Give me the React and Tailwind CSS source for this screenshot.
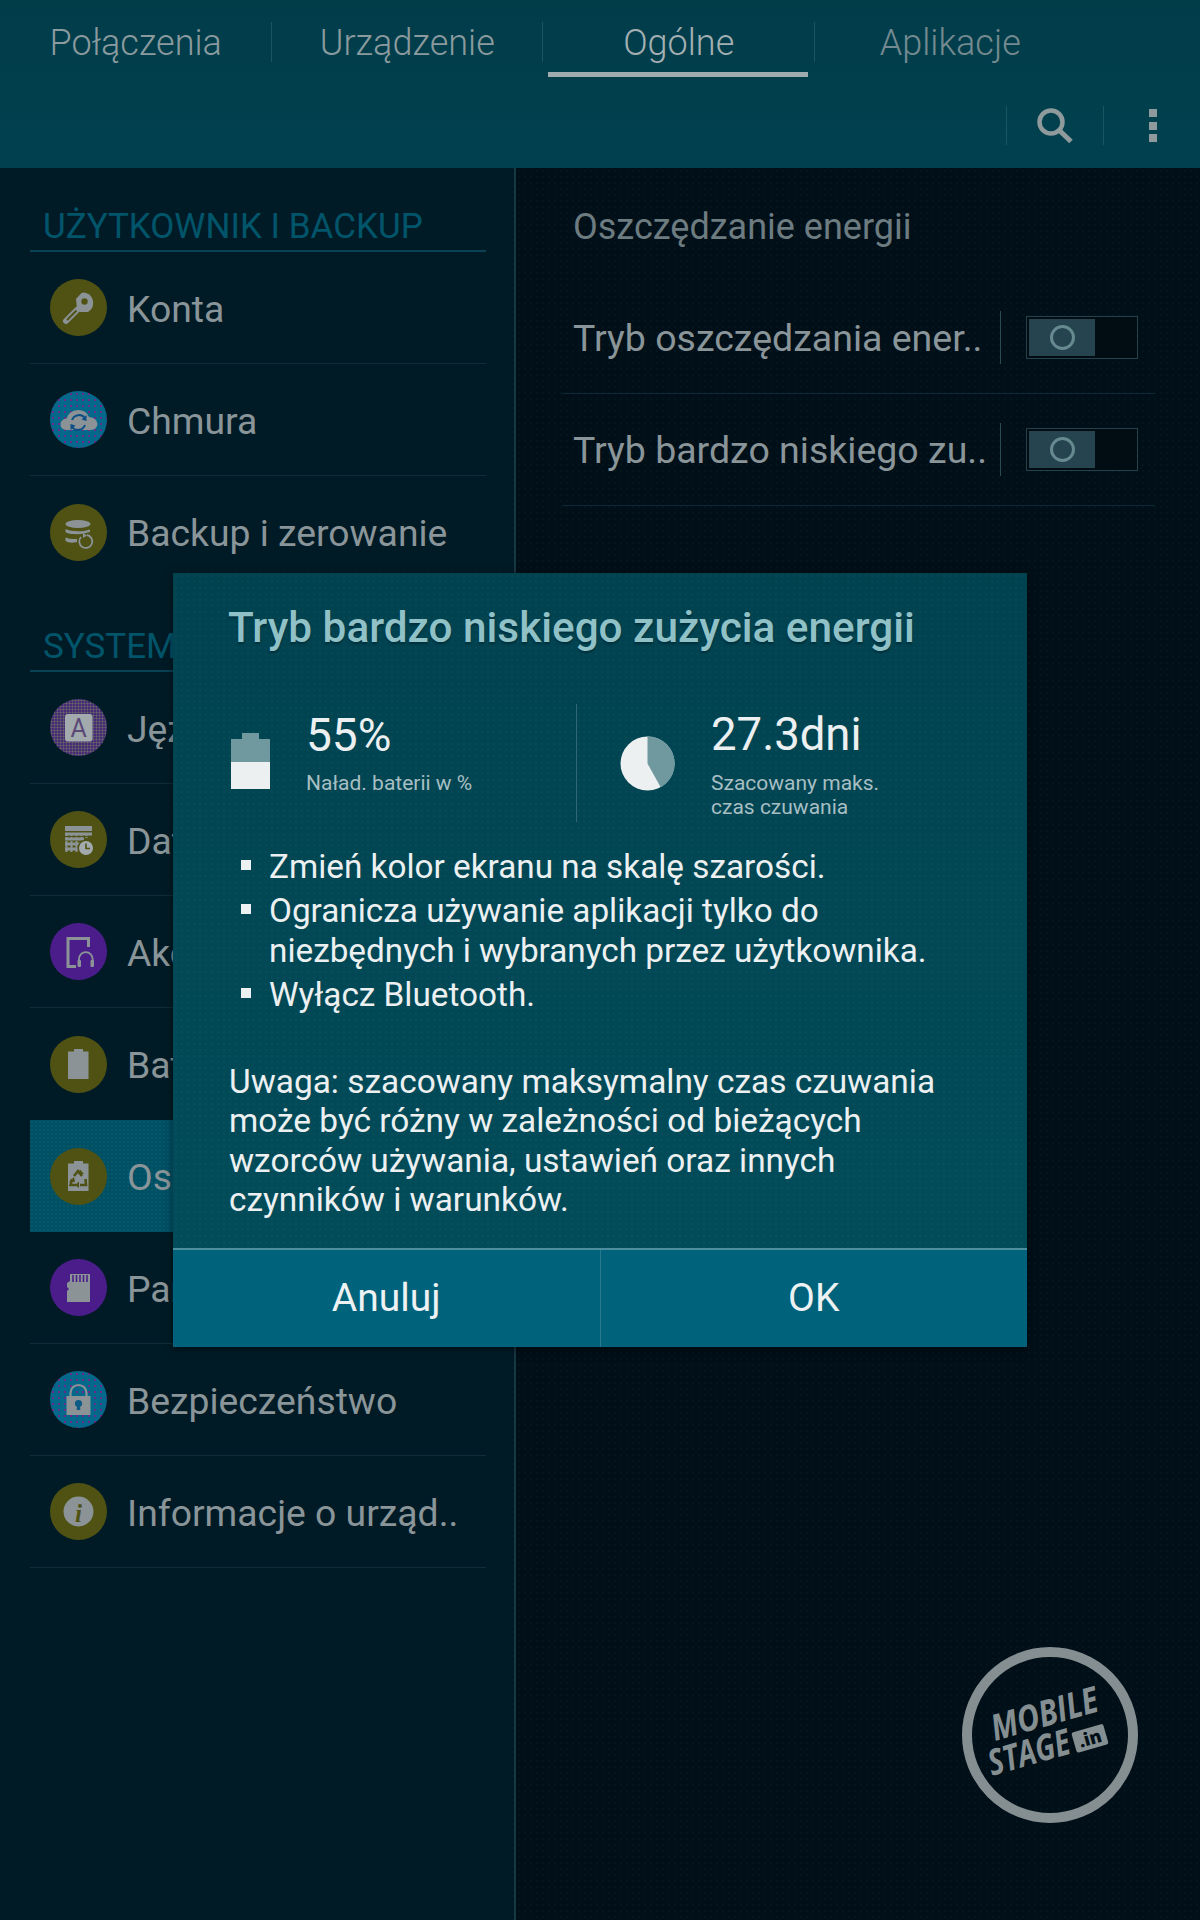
import React from "react";

const ink = "#8b9397";

const Key = () => (
  <svg viewBox="0 0 57 57" className="w-full h-full">
    <path d="M26 20 L31 14.5 Q33 13 36 14 A10.5 10.5 0 0 1 38 33 L30 33 L27 30 Z" fill={ink} />
    <circle cx="34.5" cy="22.5" r="3.2" fill="#4f5213" />
    <path d="M27 31 L16 42" stroke={ink} strokeWidth="6" strokeLinecap="round" />
    <path d="M26.5 31.5 L17 41" stroke="#4f5213" strokeWidth="2" />
  </svg>
);
const Cloud = () => (
  <svg viewBox="0 0 57 57" className="w-full h-full">
    <path d="M16 39 Q10 38 10.5 33 Q11 28 16.5 27.5 Q19 19.5 28 19 Q36 19 39 26 Q47 27 47.5 33 Q47 38.5 41 39 Z" fill={ink} />
    <path d="M22 29 A7.5 7.5 0 0 1 35 27 M35 34 A7.5 7.5 0 0 1 22 36" fill="none" stroke="#0c4f86" strokeWidth="2" />
    <path d="M36.5 24 L36.5 30 L31.5 28.5 Z M20.5 39 L20.5 33 L25.5 34.5 Z" fill="#0c4f86" />
  </svg>
);
const Backup = () => (
  <svg viewBox="0 0 57 57" className="w-full h-full">
    <ellipse cx="28" cy="20" rx="12.5" ry="4" fill={ink} />
    <path d="M15.5 25 Q22 28 34 27 L40 25.5 L40 28 Q30 31 24 30 Q18 30 15.5 28 Z" fill={ink} />
    <path d="M15.5 33.5 Q20 35.5 27 35 L27 38 Q20 40 15.5 37 Z" fill={ink} />
    <path d="M37 31 A6.5 6.5 0 1 1 31 33" fill="none" stroke={ink} strokeWidth="1.8" />
    <path d="M33 29 L37 31.5 L33 34 Z" fill={ink} />
  </svg>
);
const Lang = () => (
  <svg viewBox="0 0 57 57" className="w-full h-full">
    <rect x="15" y="15" width="27.5" height="27.5" rx="3" fill="#a3aaae" />
    <text x="28.7" y="38" textAnchor="middle" fontSize="25" fontFamily="Roboto, sans-serif" fill="#5b4a78">A</text>
  </svg>
);
const Calendar = () => (
  <svg viewBox="0 0 57 57" className="w-full h-full">
    <rect x="15" y="15" width="27" height="5" fill={ink} />
    <path d="M15 23 H42 M15 28 H34 M15 33 H30 M15 38 H30" stroke={ink} strokeWidth="3" />
    <path d="M16.5 22 V42 M21.5 22 V42 M26.5 22 V42 M31.5 22 V30 M36.5 22 V27" stroke={ink} strokeWidth="2" strokeDasharray="3 1" />
    <circle cx="36" cy="37" r="8.5" fill="#4f5213" />
    <circle cx="36" cy="37" r="7" fill="#a3aaae" />
    <path d="M36 32.5 V37.5 H40" stroke="#4f5213" strokeWidth="1.6" fill="none" />
  </svg>
);
const Accessory = () => (
  <svg viewBox="0 0 57 57" className="w-full h-full">
    <path d="M38.5 24 V15.5 H18 V43.5 H26" fill="none" stroke={ink} strokeWidth="3" />
    <path d="M29 41 V36 A6.8 6.8 0 0 1 42.6 36 V41" fill="none" stroke={ink} strokeWidth="1.8" />
    <rect x="27.5" y="37" width="3.5" height="7" rx="1" fill={ink} />
    <rect x="40.5" y="37" width="3.5" height="7" rx="1" fill={ink} />
  </svg>
);
const Battery = () => (
  <svg viewBox="0 0 57 57" className="w-full h-full">
    <path d="M24 13 H33 V15.5 H38.5 V43 H18 V15.5 H24 Z" fill={ink} />
  </svg>
);
const Eco = () => (
  <svg viewBox="0 0 57 57" className="w-full h-full">
    <path d="M24 13 H33 V15.5 H38.5 V43 H18 V15.5 H24 Z" fill={ink} />
    <path d="M24 28 L28 23 L32 28 M35.5 31 L36 37 L30 37 M26 37 L20.5 37 L22 31" fill="none" stroke="#4f5213" strokeWidth="2.6" />
    <path d="M30 21.5 L34 26 L28.5 26.5 Z M29 33.5 L29 40 L25 37 Z M19 34 L24 29 L25 34 Z" fill="#4f5213" />
  </svg>
);
const Card = () => (
  <svg viewBox="0 0 57 57" className="w-full h-full">
    <path d="M20 15 H40 V43 H17 V32 L19 30 L17 28 V24 L20 22 Z" fill={ink} />
    <path d="M23 16 V23 M26.5 16 V23 M30 16 V23 M33.5 16 V23 M37 16 V23" stroke="#4b1d8b" strokeWidth="1.6" />
  </svg>
);
const Lock = () => (
  <svg viewBox="0 0 57 57" className="w-full h-full">
    <path d="M20.5 26 V22 A8 8 0 0 1 36.5 22 V26" fill="none" stroke={ink} strokeWidth="2.2" />
    <rect x="16.5" y="25" width="24" height="19" fill={ink} />
    <circle cx="28.5" cy="32.5" r="3.6" fill="#0c5a86" />
    <path d="M27.2 34 H29.8 L30.4 39 H26.6 Z" fill="#0c5a86" />
  </svg>
);
const Info = () => (
  <svg viewBox="0 0 57 57" className="w-full h-full">
    <circle cx="28.5" cy="28.5" r="15" fill={ink} />
    <text x="28.5" y="39" textAnchor="middle" fontSize="25" fontWeight="700" fontStyle="italic" fontFamily="'Liberation Serif', serif" fill="#4f5213">i</text>
  </svg>
);

const olive = "bg-[#4f5213]";
const blue = "bg-[#03688a] bg-[radial-gradient(#6a2a90_1px,transparent_1.2px)] bg-[length:6px_6px]";
const purple = "bg-[#4b1d8b]";
const gray = "bg-[#482c78] bg-[radial-gradient(#666a64_0.9px,transparent_1.1px)] bg-[length:3px_3px]";

const Row = ({ icon: Icon, color, label, selected, last, clipped }) => (
  <div
    className={`h-[112px] flex items-center pl-5 gap-5 ${last ? "" : "border-b border-[#0f2c39]"} ${
      selected ? "bg-[#014f63] bg-[radial-gradient(#03586c_1px,transparent_1.2px)] bg-[length:4px_4px] border-b-0" : ""
    }`}
  >
    <div className={`w-[57px] h-[57px] rounded-full shrink-0 ${color}`}>
      <Icon />
    </div>
    <span className={`text-[37.3px] leading-[40px] mt-[2px] text-[#8a9599] whitespace-nowrap ${clipped ? "w-[60px] overflow-hidden" : ""}`}>
      {label}
    </span>
  </div>
);

const Section = ({ title, children }) => (
  <div>
    <div className="h-[84px] flex items-end border-b-2 border-[#0a4255] pl-[13px] pb-[3px]">
      <span className="text-[35px] leading-[40px] text-[#01556b] whitespace-nowrap">{title}</span>
    </div>
    {children}
  </div>
);

const Toggle = () => (
  <div className="w-[112px] h-[43px] border border-[#23424d] bg-[#010c13] p-[2px] ml-[25px] flex">
    <div className="w-[66px] h-full bg-[#26444f] flex items-center justify-center">
      <div className="w-[25px] h-[25px] rounded-full border-[3px] border-[#668a90]" />
    </div>
  </div>
);

const SetRow = ({ label }) => (
  <div className="h-[112px] border-b border-[#0c2a36] flex items-center pl-[11px]">
    <span className="w-[427px] text-[37.5px] leading-[40px] text-[#8a9599] whitespace-nowrap">{label}</span>
    <div className="w-px h-[53px] bg-[#2c4a54]" />
    <Toggle />
  </div>
);

const Tab = ({ children, active, dim, sep }) => (
  <div className="relative h-[40px] flex items-center justify-center">
    <span className={`text-[36px] font-light leading-[40px] mt-[2px] ${active ? "text-[#a3afb2]" : dim ? "text-[#748a90]" : "text-[#8a9a9e]"}`}>
      {children}
    </span>
    {sep && <div className="absolute right-0 top-0 w-px h-full bg-[#1a5562]" />}
  </div>
);

const Bullet = ({ children }) => (
  <li className="flex">
    <span className="w-[10px] h-[10px] bg-[#eef1f2] mt-[13px] ml-[13px] mr-[18px] shrink-0" />
    <span>{children}</span>
  </li>
);

export default function App() {
  return (
    <div className="relative w-[1200px] h-[1920px] overflow-hidden bg-[#010f18] font-['Roboto',sans-serif]">
      <header className="h-[168px] bg-gradient-to-b from-[#013c49] to-[#01414f]">
        <div className="pt-[22px] grid grid-cols-4 w-[1086px]">
          <Tab sep>Połączenia</Tab>
          <Tab sep>Urządzenie</Tab>
          <Tab active sep>Ogólne</Tab>
          <Tab dim>Aplikacje</Tab>
        </div>
        <div className="ml-[548px] w-[260px] h-[5px] mt-[10px] bg-[#a0abaf]" />
        <div className="mt-[29px] flex justify-end">
          <div className="w-[97px] h-[39px] border-l border-[#1a5562] flex items-center justify-center">
            <svg viewBox="0 0 38 38" className="w-[38px] h-[38px]">
              <circle cx="15" cy="15" r="11.5" fill="none" stroke="#8f9a9d" strokeWidth="4.5" />
              <path d="M23.5 23.5 L35 34.5" stroke="#8f9a9d" strokeWidth="5" />
            </svg>
          </div>
          <div className="w-[97px] h-[39px] border-l border-[#1a5562] flex flex-col items-center justify-between pl-[1px] py-[3px]">
            <span className="w-[8px] h-[8px] bg-[#8f9a9d]" />
            <span className="w-[8px] h-[8px] bg-[#8f9a9d]" />
            <span className="w-[8px] h-[8px] bg-[#8f9a9d]" />
          </div>
        </div>
      </header>

      <main className="flex h-[1752px]">
        <aside className="w-[516px] h-full bg-[#011b26] border-r-2 border-[#163744] pl-[30px] pr-[28px] shrink-0">
          <Section title="UŻYTKOWNIK I BACKUP">
            <Row icon={Key} color={olive} label="Konta" />
            <Row icon={Cloud} color={blue} label="Chmura" />
            <Row icon={Backup} color={olive} label="Backup i zerowanie" last />
          </Section>
          <Section title="SYSTEM">
            <Row icon={Lang} color={gray} label="Język i wprowadzanie" clipped />
            <Row icon={Calendar} color={olive} label="Data i godzina" clipped />
            <Row icon={Accessory} color={purple} label="Akcesoria" clipped />
            <Row icon={Battery} color={olive} label="Bateria" last clipped />
            <Row icon={Eco} color={olive} label="Oszczędzanie energii" selected clipped />
            <Row icon={Card} color={purple} label="Pamięć" clipped />
            <Row icon={Lock} color={blue} label="Bezpieczeństwo" />
            <Row icon={Info} color={olive} label="Informacje o urząd.." />
          </Section>
        </aside>

        <section className="flex-1 pl-[46px] pr-[45px] bg-[radial-gradient(#05151e_1px,transparent_1.2px)] bg-[length:6px_6px]">
          <div className="h-[114px] flex items-center pl-[11px] pt-[4px]">
            <span className="text-[36px] leading-[40px] text-[#6d7c80]">Oszczędzanie energii</span>
          </div>
          <SetRow label="Tryb oszczędzania ener.." />
          <SetRow label="Tryb bardzo niskiego zu.." />
        </section>
      </main>

      <div className="absolute left-[173px] top-[573px] w-[854px] h-[774px] flex flex-col bg-[radial-gradient(#ffffff07_1px,transparent_1.2px),linear-gradient(#01424f,#024d5b)] bg-[length:6px_6px,100%_100%] shadow-[0_2px_8px_rgba(0,0,0,0.5)]">
        <h2 className="pt-[33px] pl-[55px] text-[42.3px] leading-[44px] font-medium text-[#90c1c7] whitespace-nowrap [text-shadow:0_2px_2px_#01303c]">
          Tryb bardzo niskiego zużycia energii
        </h2>
        <div className="mt-[54px] h-[118px] flex">
          <div className="w-[404px] border-r border-[#2f6874] flex pl-[58px]">
            <div className="w-[39px] mt-[29px] flex flex-col items-center shrink-0">
              <div className="w-[17px] h-[6px] bg-[#70989f]" />
              <div className="w-[39px] h-[23px] bg-[#70989f]" />
              <div className="w-[39px] h-[27px] bg-[#ecf0f1]" />
            </div>
            <div className="ml-[36px] text-[#ecf0f1]">
              <div className="text-[46px] leading-[50px] mt-[6px]">55%</div>
              <div className="text-[21px] leading-[24px] mt-[11px] text-[#a7bfc3]">Naład. baterii w %</div>
            </div>
          </div>
          <div className="flex pl-[43px]">
            <svg viewBox="0 0 55 55" className="w-[55px] h-[55px] mt-[32px] shrink-0">
              <circle cx="27.5" cy="27.5" r="27" fill="#ecf0f1" />
              <path d="M27.5 27.5 V0.5 A27 27 0 0 1 40.7 51.2 Z" fill="#70989f" />
            </svg>
            <div className="ml-[36px]">
              <div className="text-[45.5px] leading-[50px] mt-[6px] text-[#ecf0f1]">27.3dni</div>
              <div className="text-[21px] leading-[24px] mt-[11px] text-[#a7bfc3]">
                Szacowany maks.
                <br />
                czas czuwania
              </div>
            </div>
          </div>
        </div>
        <ul className="mt-[25px] pl-[55px] flex flex-col gap-[4px] text-[33.3px] leading-[40px] text-[#ecf0f1]">
          <Bullet>Zmień kolor ekranu na skalę szarości.</Bullet>
          <Bullet>
            Ogranicza używanie aplikacji tylko do
            <br />
            niezbędnych i wybranych przez użytkownika.
          </Bullet>
          <Bullet>Wyłącz Bluetooth.</Bullet>
        </ul>
        <p className="mt-[47px] pl-[56px] text-[33.4px] leading-[39.3px] text-[#ecf0f1]">
          Uwaga: szacowany maksymalny czas czuwania
          <br />
          może być różny w zależności od bieżących
          <br />
          wzorców używania, ustawień oraz innych
          <br />
          czynników i warunków.
        </p>
        <div className="mt-auto h-[99px] flex bg-[#00627b] border-t-2 border-[#4d8f9e] text-[39px] text-[#eef2f3]">
          <button className="flex-1 border-r border-[#2a7a8e]">Anuluj</button>
          <button className="flex-1">OK</button>
        </div>
      </div>

      <svg viewBox="0 0 180 180" className="absolute left-[960px] top-[1645px] w-[180px] h-[180px]">
        <circle cx="90" cy="90" r="83" fill="none" stroke="#858f92" strokeWidth="10" />
        <g fontFamily="'Open Sans', sans-serif" fontWeight="700" fontStyle="italic" fill="#858f92">
          <text transform="translate(35 96) rotate(-16)" fontSize="36" textLength="110" lengthAdjust="spacingAndGlyphs">MOBILE</text>
          <text transform="translate(32 131) rotate(-16)" fontSize="36" textLength="84" lengthAdjust="spacingAndGlyphs">STAGE</text>
        </g>
        <g transform="translate(117 108) rotate(-16)">
          <rect x="0" y="-21" width="33" height="21" rx="2" fill="#858f92" />
          <text x="16.5" y="-4" textAnchor="middle" fontSize="18" fontWeight="800" fontFamily="'Open Sans', sans-serif" fill="#010f18">.in</text>
        </g>
      </svg>
    </div>
  );
}
